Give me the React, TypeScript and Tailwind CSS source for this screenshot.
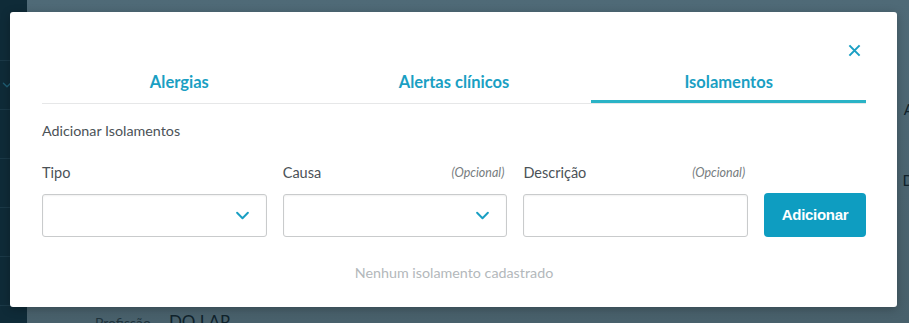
import React from 'react';

const Chevron = ({ className = '' }: { className?: string }) => (
  <svg viewBox="0 0 16 10" className={className} fill="none" stroke="currentColor" strokeWidth={2.2} strokeLinecap="round" strokeLinejoin="round">
    <path d="M2 2l6 6 6-6" />
  </svg>
);

const CloseIcon = () => (
  <svg viewBox="0 0 14 14" className="w-[13px] h-[13px] text-[#1a9fc3]" fill="none" stroke="currentColor" strokeWidth={2.2}>
    <path d="M1.5 1.5l11 11M12.5 1.5l-11 11" />
  </svg>
);

const tabs = [
  { label: 'Alergias', active: false },
  { label: 'Alertas clínicos', active: false },
  { label: 'Isolamentos', active: true },
];

const Field = ({ label, optional, select }: { label: string; optional?: boolean; select?: boolean }) => (
  <div className="flex flex-col w-[225px]">
    <div className="flex items-center justify-between h-[20px] pr-[3px]">
      <span className="text-[14.5px] text-[#4b5257]">{label}</span>
      {optional && <span className="text-[12.5px] italic text-[#777d80]">(Opcional)</span>}
    </div>
    <div className="mt-[11px] h-[43px] rounded-[3px] border border-[#c9cbcc] bg-white shadow-[inset_0_1px_2px_rgba(0,0,0,0.06)] flex items-center justify-end pr-[16px]">
      {select && <Chevron className="w-[15px] h-[9px] text-[#1a9fc3]" />}
    </div>
  </div>
);

export default function App() {
  return (
    <div className="relative w-[909px] h-[323px] overflow-hidden flex font-['Lato',sans-serif]">
      <aside className="w-[27px] bg-[#0f2b38] flex flex-col pt-[12px]">
        {[0, 1, 2, 3, 4, 5].map((i) => (
          <div key={i} className="h-[49px] border-b border-[#1b3947] flex items-center justify-center">
            {i === 1 && <Chevron className="w-[10px] h-[6px] text-[#1f5d73] -ml-[14px]" />}
          </div>
        ))}
      </aside>

      <main className="flex-1 bg-gradient-to-b from-[#4f6a77] to-[#48606b] flex flex-col text-[#10232c]">
        <div className="flex justify-end pt-[98px]">
          <span className="text-[15px] translate-x-[5px]">A</span>
        </div>
        <div className="flex justify-end pt-[48px]">
          <span className="text-[15px] translate-x-[5px]">D</span>
        </div>
        <div className="flex items-baseline gap-[18px] pl-[68px] pt-[118px]">
          <span className="text-[14px] text-[#1f333c]">Profissão</span>
          <span className="text-[17px]">DO LAR</span>
        </div>
      </main>

      <div className="absolute left-[10px] top-[12px] w-[887px] h-[295px] bg-white rounded-[3px] shadow-[0_2px_10px_rgba(0,0,0,0.25)] flex flex-col pl-[32px] pr-[31px]">
        <div className="flex justify-end pt-[32px] pr-[5px] h-[50px]">
          <CloseIcon />
        </div>

        <div className="flex border-b border-[#e6e7e8]">
          {tabs.map((t) => (
            <div
              key={t.label}
              className={`flex-1 h-[41px] flex items-center justify-center text-[16.5px] font-bold text-[#1a9fc3] ${t.active ? 'border-b-[3px] border-[#2ab3c6] -mb-[1px] pt-[2px]' : 'pb-[1px]'}`}
            >
              {t.label}
            </div>
          ))}
        </div>

        <div className="pt-[18px] text-[14.3px] text-[#4b5257] leading-[18px]">Adicionar Isolamentos</div>

        <div className="flex items-end gap-[16px] pt-[23px]">
          <Field label="Tipo" select />
          <Field label="Causa" optional select />
          <Field label="Descrição" optional />
          <button className="h-[44px] w-[102px] rounded-[4px] bg-[#0e9dc1] text-white font-['Liberation_Sans',sans-serif] font-bold text-[15px] tracking-[-0.3px]">
            Adicionar
          </button>
        </div>

        <div className="pt-[25px] text-center text-[14.3px] text-[#b3b8bb]">Nenhum isolamento cadastrado</div>
      </div>
    </div>
  );
}
